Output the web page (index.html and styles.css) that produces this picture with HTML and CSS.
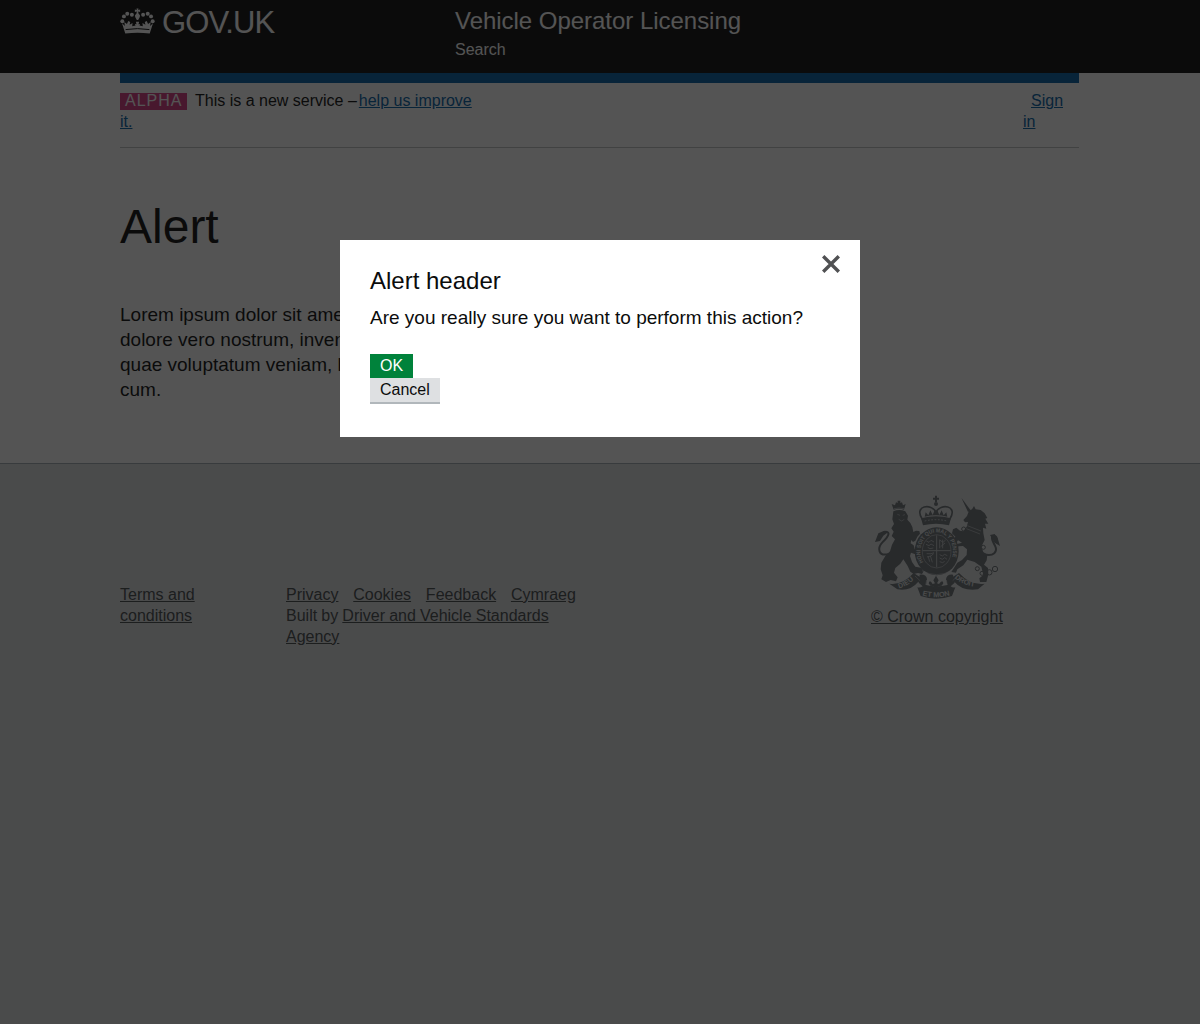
FILE: index.html
```html
<!DOCTYPE html>
<html lang="en">
<head>
<meta charset="utf-8">
<title>Vehicle Operator Licensing</title>
<link rel="stylesheet" href="styles.css">
</head>
<body>
<header class="header">
  <div class="container header-row">
    <a class="logo" href="#">
      <svg class="logo-crown" viewBox="14 14 106 78" aria-hidden="true">
        <g fill="currentColor">
          <circle cx="21" cy="54" r="6"/><circle cx="26" cy="39" r="6"/><circle cx="36" cy="31" r="6"/><circle cx="50" cy="34" r="6"/>
          <circle cx="84" cy="34" r="6"/><circle cx="98" cy="31" r="6"/><circle cx="108" cy="39" r="6"/><circle cx="113" cy="54" r="6"/>
          <path d="M64 15h6l-1 5 6-2v8l-6-2 1 6q7 5 4 11l-5 9h-4l-5-9q-3-6 4-11l1-6-6 2v-8l6 2z"/>
          <path d="M20 60l9 8-2-12 8 6 4-9 6 3-2 8 9-5-1 10 10-2-2-5 5 1-2-8h10l-2 8 5-1-2 5 10 2-1-10 9 5-2-8 6-3 4 9 8-6-2 12 9-8-10 31q-37-5-74 0z"/>
        </g>
        <path d="M31 79q36-6 72 0" fill="none" stroke="#0b0c0c" stroke-width="3"/>
      </svg>
      <span>GOV.UK</span>
    </a>
    <div class="service">
      <a class="service-name" href="#">Vehicle Operator Licensing</a>
      <a class="service-link" href="#">Search</a>
    </div>
  </div>
</header>

<div class="container">
  <div class="phase">
    <p class="phase-text"><strong class="tag">ALPHA</strong>This is a new service –<a href="#">help us improve it.</a></p>
    <p class="sign-in"><a href="#">Sign in</a></p>
  </div>
  <main class="main">
    <h1>Alert</h1>
    <p>Lorem ipsum dolor sit amet, consectetur adipisicing elit. Minus<br>dolore vero nostrum, inventore eligendi magni sapiente<br>quae voluptatum veniam, laborum repellendus facilis<br>cum.</p>
  </main>
</div>

<footer class="footer">
  <div class="container footer-row">
    <p class="terms"><a href="#">Terms and conditions</a></p>
    <div class="footer-nav">
      <ul class="links">
        <li><a href="#">Privacy</a></li>
        <li><a href="#">Cookies</a></li>
        <li><a href="#">Feedback</a></li>
        <li><a href="#">Cymraeg</a></li>
      </ul>
      <p class="built-by">Built by <a href="#">Driver and Vehicle Standards Agency</a></p>
    </div>
    <a class="copyright" href="#">
      <svg class="crest" viewBox="0 0 408 342" aria-hidden="true">
        <defs>
          <path id="garter" d="M162 220A49 57 0 1 1 238 220"/>
          <path id="scroll-left" d="M87 295Q114 288 137 263"/>
          <path id="scroll-mid" d="M152 315Q198 328 246 315"/>
          <path id="scroll-right" d="M254 264Q281 288 322 291"/>
        </defs>
        <g class="ink">
          <!-- royal crown -->
          <path d="M195 17h6v6h6v6h-6v7h-6v-7h-6v-6h6z"/>
          <circle cx="198" cy="42" r="6"/>
          <path d="M153 85q45-12 90 0l-6 21q-39-9-78 0z"/>
          <path d="M164 80l3-13 8 9 6-15 7 14 5-12h10l5 12 7-14 6 15 8-9 3 13q-34-8-68 0z"/>
          <!-- lion -->
          <path d="M71 59L65 42l10 4 3-9 5 2v-7h8v7l5-2 3 9 8-4-5 17q-15-5-31 0z"/>
          <path d="M70 64Q88 56 106 64L114 77 112 89 121 99 127 111 130 126 138 122 148 123 150 131 142 140 136 152 129 156 124 150 122 160 131 166 134 178 148 181 154 188 145 195 134 192 123 188 120 198 126 216 136 230 153 233 162 242 156 252 144 249 131 252 121 245 113 228 100 208 91 221 76 234 72 248 83 262 78 274 62 270 48 276 34 268 38 256 32 238 34 218 46 198 60 184 66 164 75 148 65 138 71 125 64 115 72 102 67 88z"/>
          <!-- unicorn -->
          <path d="M274 23l28 38-8 5z"/>
          <path d="M297 62L306 58 312 48 317 58 332 60 344 70 352 84 346 86 355 101 345 101 349 116 339 113 340 130 344 150 334 170 340 186 352 194 350 211 342 224 354 234 355 254 349 276 330 276 328 265 340 255 334 230 314 216 292 209 280 226 262 238 258 248 244 246 252 234 262 218 276 210 290 195 291 178 279 168 266 169 254 179 247 173 258 163 276 158 264 151 258 160 250 153 256 140 246 130 249 118 259 113 270 122 280 124 290 110 294 96 285 97 280 90 291 78z"/>
          <!-- shield -->
          <ellipse cx="200" cy="184" rx="66" ry="72"/>
          <!-- motto scroll -->
          <path d="M58 281Q96 287 131 249L160 268 155 278 145 275Q120 305 82 298z"/>
          <path d="M344 281Q302 287 267 249L238 268 243 278 253 275Q278 305 324 298z"/>
          <path d="M142 292Q150 294 158 289L146 278 149 254Q170 252 171 268L168 285Q198 293 232 285L228 268Q230 252 249 254L254 278 242 289Q248 294 256 292L246 318Q198 334 152 318z"/>
          <path d="M198 257l8 14-5 9 6 2q11-15 13-2l-5 7-12 2 4 9h-18l4-9-12-2-5-7q3-13 12 2l7-2-5-9z"/>
        </g>
        <g class="line">
          <path d="M157 88c-28-43 29-48 41-22M239 88c28-43-29-48-41-22" stroke-width="5"/>
          <path d="M56 192c-31 8-36-17-17-37 19-18 21-29 9-30q-14 1-16 18" stroke-width="6"/>
          <path d="M342 193c29 8 42-8 33-26-9-17-13-27-4-29q8-1 10 10" stroke-width="6"/>
          <circle cx="340" cy="172" r="6"/><circle cx="322" cy="236" r="6"/><circle cx="336" cy="250" r="6"/><circle cx="358" cy="247" r="8"/><circle cx="375" cy="237" r="8"/>
          <circle cx="281" cy="117" r="6"/>
        </g>
        <path class="ink" d="M15 156l10-26 18-8 12 4-15 11-10 16zM360 135l14-3 10 16 6 20-16-10z"/>
        <g class="cut">
          <ellipse cx="200" cy="184" rx="43" ry="50" stroke-width="2"/>
          <path d="M200 136v96M158 182h84" stroke-width="3"/>
          <path d="M169 153l8 4 6-6 9 5M168 163l9 4 6-5 9 5M173 172l7 4 10-2M209 149v26M209 150l10 7 8-7M218 149v26M212 170l13-11M170 191q15 2 22-3M171 201q13-1 20-10M179 215l-5-17M187 217l-6-20M209 194l8 4 7-5 8 4M209 204l8 4 7-5 7 5M209 215l9 3 6-4" stroke-width="2.5"/>
          <path d="M164 93q34-8 68 0" stroke-width="3" stroke-dasharray="5 5"/>
          <path d="M82 73l8 3M98 76l7-2M86 88l9 5 8-5M72 56q15-4 31 0M289 116l41 16M292 107l41 16" stroke-width="2"/>
          <path d="M156 242q44 24 88 0" stroke-width="2"/>
          <path d="M135 258l15 14M263 258l-15 14M170 270l-3 15M229 270l3 15" stroke-width="2"/>
        </g>
        <g class="motto">
          <text font-size="17"><textPath href="#garter" startOffset="4" textLength="218" lengthAdjust="spacingAndGlyphs">HONI SOIT QUI MAL Y PENSE</textPath></text>
          <text font-size="21"><textPath href="#scroll-left" textLength="52">DIEU</textPath></text>
          <text font-size="22"><textPath href="#scroll-mid" startOffset="5" textLength="84">ET MON</textPath></text>
          <text font-size="21"><textPath href="#scroll-right" textLength="65">DROIT</textPath></text>
        </g>
      </svg>
      <span>© Crown copyright</span>
    </a>
  </div>
</footer>

<div class="overlay">
  <section class="modal" role="dialog" aria-modal="true" aria-labelledby="modal-title">
    <button class="close" type="button" aria-label="Close">
      <svg viewBox="0 0 18 18" aria-hidden="true"><path d="M1.2 1.2l15.6 15.6M16.8 1.2L1.2 16.8" stroke="currentColor" stroke-width="3.4"/></svg>
    </button>
    <h2 id="modal-title">Alert header</h2>
    <p>Are you really sure you want to perform this action?</p>
    <div class="actions">
      <button class="button" type="button">OK</button>
      <button class="button button-secondary" type="button">Cancel</button>
    </div>
  </section>
</div>
</body>
</html>
```

FILE: styles.css
```css
* { box-sizing: border-box; }
html, body { height: 100%; }
body {
  margin: 0;
  display: flex;
  flex-direction: column;
  overflow: hidden;
  background: #fff;
  color: #0b0c0c;
  font: 16px/21px "Liberation Sans", Arial, sans-serif;
}
h1, h2, p, ul { margin: 0; padding: 0; font-weight: 400; }
.container { width: 959px; margin-left: 120px; }

.header { height: 73px; background: #0b0c0c; }
.header a { color: #fff; text-decoration: none; }
.header-row { display: flex; padding-top: 7px; }
.logo { display: flex; width: 335px; font-size: 31px; line-height: 31px; letter-spacing: -0.9px; }
.logo-crown { width: 35px; height: 26px; margin: 1px 7px 0 0; }
.service { display: flex; flex-direction: column; }
.service-name { font-size: 24px; line-height: 28px; letter-spacing: -0.03px; }
.service-link { margin-top: 4px; line-height: 21px; }

.phase {
  display: flex;
  justify-content: space-between;
  height: 75px;
  padding-top: 7px;
  border-top: 10px solid #005ea5;
  border-bottom: 1px solid #bfc1c3;
}
.phase a { color: #005ea5; }
.phase-text { width: 360px; }
.phase-text a { margin-left: 2px; }
.sign-in { width: 56px; padding-right: 15px; text-indent: 8px; }
.tag {
  display: inline-block;
  height: 17px;
  margin-right: 7.5px;
  padding: 0 5px;
  background: #d53880;
  color: #fff;
  font-weight: 400;
  line-height: 15px;
  letter-spacing: 1px;
}

.main { padding-top: 54px; }
.main h1 { font-size: 48px; line-height: 50px; }
.main p { margin-top: 50px; padding-bottom: 61px; font-size: 19px; line-height: 25px; white-space: nowrap; }

.footer { flex: 1; border-top: 1px solid #a1acb2; background: #dee0e2; color: #454a4c; }
.footer a { color: inherit; }
.footer-row { display: flex; align-items: flex-start; padding-top: 26px; }
.terms { width: 166px; padding: 94px 60px 0 0; }
.footer-nav { width: 582px; padding: 94px 285px 0 0; }
.links { display: flex; gap: 14.8px; list-style: none; white-space: nowrap; }
.built-by { word-spacing: -0.3px; }
.copyright { display: flex; flex-direction: column; width: 136px; white-space: nowrap; }
.copyright span { margin: 2px 0 0 3px; }
.crest { width: 136px; height: 114px; margin-left: 2px; }
.ink { fill: #6b7276; }
.line { fill: none; stroke: #6b7276; stroke-width: 3; }
.cut { fill: none; stroke: #dee0e2; opacity: 0.75; }
.motto { fill: #dee0e2; font-weight: 700; }

.overlay {
  position: fixed;
  inset: 0;
  display: flex;
  justify-content: center;
  align-items: flex-start;
  padding-top: 240px;
  background: rgba(11, 12, 12, 0.7);
}
.modal { position: relative; width: 520px; height: 197px; padding: 26px 30px 0; background: #fff; }
.modal h2 { font-size: 24px; line-height: 30px; }
.modal p { margin-top: 9px; font-size: 19px; line-height: 25px; }
.close {
  position: absolute;
  top: 15px;
  right: 20px;
  width: 18px;
  height: 18px;
  padding: 0;
  border: 0;
  background: none;
  color: #505153;
}
.close svg { display: block; }
.actions { display: flex; flex-direction: column; align-items: flex-start; margin-top: 24px; }
.button {
  height: 24px;
  padding: 0 10px;
  border: 0;
  background: #00823b;
  color: #fff;
  font: 16px/24px "Liberation Sans", Arial, sans-serif;
}
.button-secondary { height: 26px; border-bottom: 2px solid #b1b7bb; background: #dee0e2; color: #0b0c0c; }
```
